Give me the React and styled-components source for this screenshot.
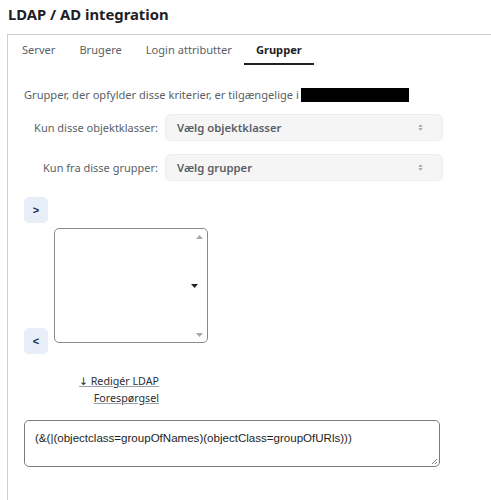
import styled, { createGlobalStyle } from 'styled-components'

const GlobalStyle = createGlobalStyle`
  html, body {
    margin: 0;
    padding: 0;
    background: #fff;
  }
  body {
    font-family: "Noto Sans", "DejaVu Sans", sans-serif;
    color: #1d2125;
  }
`

const Page = styled.div`
  width: 491px;
  height: 500px;
  overflow: hidden;
`

const Title = styled.h2`
  margin: 0;
  padding: 4px 0 0 8px;
  height: 34px;
  box-sizing: border-box;
  font-size: 14.8px;
  line-height: 20px;
  font-weight: 700;
  color: #1d2125;
`

const Card = styled.div`
  margin-left: 7px;
  border-left: 1px solid #cfcfcf;
  border-top: 1px solid #cfcfcf;
  min-height: 470px;
`

const Tabs = styled.div`
  display: flex;
  padding-left: 2px;
`

const Tab = styled.div`
  padding: 7px 12px 5px;
  font-size: 11.1px;
  line-height: 16px;
  font-weight: ${({ $active }) => ($active ? 700 : 400)};
  color: ${({ $active }) => ($active ? '#1d2125' : '#5a5f66')};
  border-bottom: 2px solid ${({ $active }) => ($active ? '#1d2125' : 'transparent')};
`

const Content = styled.div`
  padding: 22px 0 0 16px;
`

const Description = styled.p`
  margin: 0;
  font-size: 11.1px;
  line-height: 16px;
  color: #5a5f66;
  display: flex;
  align-items: center;
  white-space: nowrap;
`

const Redacted = styled.span`
  display: inline-block;
  width: 108px;
  height: 14px;
  background: #000;
  margin-left: 2px;
`

const FilterGrid = styled.div`
  display: grid;
  grid-template-columns: 134px 278px;
  column-gap: 7px;
  row-gap: 13px;
  align-items: center;
  margin-top: 11px;
`

const Label = styled.label`
  text-align: right;
  font-size: 11px;
  white-space: nowrap;
  color: #5a5f66;
`

const Select = styled.div`
  height: 27px;
  box-sizing: border-box;
  display: flex;
  align-items: center;
  justify-content: space-between;
  padding: 0 19px 0 11px;
  background: #f5f5f5;
  border: 1px solid #ececec;
  border-radius: 6px;
  font-size: 11.3px;
  font-weight: 600;
  color: #5a5f66;
`

const Caret = () => (
  <svg width="5" height="7" viewBox="0 0 5 7">
    <path d="M0.3 2.7 L2.5 0.5 L4.7 2.7 Z M0.3 4.3 L2.5 6.5 L4.7 4.3 Z" fill="#9a9a9a" />
  </svg>
)

const Mover = styled.div`
  display: flex;
  gap: 6px;
  margin-top: 16px;
`

const ButtonCol = styled.div`
  height: 157px;
  display: flex;
  flex-direction: column;
  justify-content: space-between;
`

const MoveButton = styled.button`
  width: 24px;
  height: 26px;
  padding: 0;
  border: none;
  border-radius: 5px;
  background: #e7eef8;
  color: #0f2a52;
  font-family: "Liberation Sans", Arial, sans-serif;
  font-size: 11px;
  font-weight: 700;
`

const ListBox = styled.div`
  position: relative;
  margin-top: 31px;
  width: 154px;
  height: 115px;
  box-sizing: border-box;
  border: 1.5px solid #8a8a8a;
  border-radius: 5px;
`

const ScrollArrow = styled.span`
  position: absolute;
  right: 4px;
  ${({ $down }) => ($down ? 'bottom: 5px;' : 'top: 6px;')}
  display: flex;
`

const MiddleCaret = styled.span`
  position: absolute;
  right: 9px;
  top: 55px;
  display: flex;
`

const EditLink = styled.a`
  display: block;
  width: 135px;
  margin-top: 19px;
  text-align: right;
  font-size: 10.7px;
  line-height: 17px;
  color: #2b2f33;
  text-decoration: underline;
  text-decoration-color: #9aa0a6;
`

const Query = styled.div`
  position: relative;
  margin-top: 13px;
  width: 416px;
  height: 47px;
  box-sizing: border-box;
  border: 1.5px solid #7a7a7a;
  border-radius: 5px;
  padding: 10px 10px;
  font-family: "Liberation Sans", Arial, sans-serif;
  font-size: 11.55px;
  line-height: 14px;
  color: #1d1d1d;
`

const Grip = styled.span`
  position: absolute;
  right: 1px;
  bottom: 1px;
  display: flex;
`

export default function App() {
  return (
    <Page>
      <GlobalStyle />
      <Title>LDAP / AD integration</Title>
      <Card>
        <Tabs>
          <Tab>Server</Tab>
          <Tab>Brugere</Tab>
          <Tab>Login attributter</Tab>
          <Tab $active>Grupper</Tab>
        </Tabs>
        <Content>
          <Description>
            Grupper, der opfylder disse kriterier, er tilgængelige i
            <Redacted />
          </Description>
          <FilterGrid>
            <Label>Kun disse objektklasser:</Label>
            <Select>
              Vælg objektklasser
              <Caret />
            </Select>
            <Label>Kun fra disse grupper:</Label>
            <Select>
              Vælg grupper
              <Caret />
            </Select>
          </FilterGrid>
          <Mover>
            <ButtonCol>
              <MoveButton>&gt;</MoveButton>
              <MoveButton>&lt;</MoveButton>
            </ButtonCol>
            <ListBox>
              <ScrollArrow>
                <svg width="7" height="4" viewBox="0 0 7 4">
                  <path d="M0 4 L3.5 0 L7 4 Z" fill="#a8a8a8" />
                </svg>
              </ScrollArrow>
              <MiddleCaret>
                <svg width="7" height="4" viewBox="0 0 7 4">
                  <path d="M0 0 L7 0 L3.5 4 Z" fill="#222" />
                </svg>
              </MiddleCaret>
              <ScrollArrow $down>
                <svg width="7" height="4" viewBox="0 0 7 4">
                  <path d="M0 0 L7 0 L3.5 4 Z" fill="#a8a8a8" />
                </svg>
              </ScrollArrow>
            </ListBox>
          </Mover>
          <EditLink href="#">↓ Redigér LDAP Forespørgsel</EditLink>
          <Query>
            (&amp;(|(objectclass=groupOfNames)(objectClass=groupOfURls)))
            <Grip>
              <svg width="8" height="8" viewBox="0 0 8 8">
                <path d="M7 2 L2 7 M7 5 L5 7" stroke="#888" strokeWidth="1" />
              </svg>
            </Grip>
          </Query>
        </Content>
      </Card>
    </Page>
  )
}
